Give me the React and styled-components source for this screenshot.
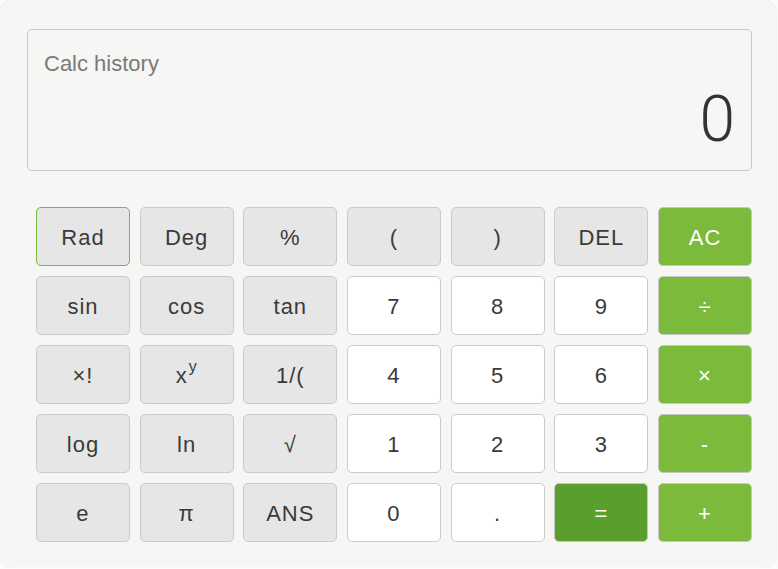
import React from "react";
import styled, { createGlobalStyle } from "styled-components";

const Global = createGlobalStyle`
  html, body { margin: 0; padding: 0; background: #fbfbfa; }
  body { font-family: "Liberation Sans", Arial, sans-serif; }
`;

const Card = styled.div`
  box-sizing: border-box;
  width: 776px;
  height: 567px;
  background: #f6f6f4;
  border-radius: 12px;
  box-shadow: 0 0 2px rgba(0, 0, 0, 0.12);
  padding: 29px 24px 0 27px;
  display: flex;
  flex-direction: column;
  gap: 36px;
`;

const Display = styled.div`
  box-sizing: border-box;
  height: 142px;
  border: 1px solid #c9c9c9;
  border-radius: 5px;
  padding: 20px 16px 0 16px;
  display: flex;
  flex-direction: column;
`;

const History = styled.div`
  font-size: 22px;
  color: #7a7a7a;
  line-height: 28px;
`;

const Result = styled.div`
  font-family: Roboto, "Liberation Sans", sans-serif;
  font-weight: 300;
  font-size: 64px;
  line-height: 64px;
  color: #333;
  text-align: right;
  margin-top: 10px;
`;

const Keys = styled.div`
  display: grid;
  grid-template-columns: repeat(7, 1fr);
  grid-auto-rows: 59px;
  column-gap: 9.7px;
  row-gap: 10px;
  padding-left: 9px;
`;

const palette = {
  fn: { bg: "#e6e6e6", fg: "#3a3a3a", border: "#cbcbcb" },
  num: { bg: "#ffffff", fg: "#3a3a3a", border: "#cbcbcb" },
  op: { bg: "#7cba3c", fg: "#ffffff", border: "#c6c6c6" },
  eq: { bg: "#5a9e2e", fg: "#ffffff", border: "#c6c6c6" },
};

const Key = styled.button`
  box-sizing: border-box;
  margin: 0;
  padding: 2px 0 0 0;
  border-radius: 5px;
  border: 1px solid ${(p) => (p.$active ? "#78b83a" : palette[p.$kind].border)};
  background: ${(p) => palette[p.$kind].bg};
  color: ${(p) => palette[p.$kind].fg};
  font-family: "Liberation Sans", Arial, sans-serif;
  font-size: 22px;
  letter-spacing: 1px;
  display: flex;
  align-items: center;
  justify-content: center;
  cursor: pointer;
`;

const Sup = styled.span`
  font-size: 16px;
  position: relative;
  top: -9px;
  margin-left: 1px;
`;

const rows = [
  [["Rad", "fn", true], ["Deg", "fn"], ["%", "fn"], ["(", "fn"], [")", "fn"], ["DEL", "fn"], ["AC", "op"]],
  [["sin", "fn"], ["cos", "fn"], ["tan", "fn"], ["7", "num"], ["8", "num"], ["9", "num"], ["÷", "op"]],
  [["×!", "fn"], ["xy", "fn"], ["1/(", "fn"], ["4", "num"], ["5", "num"], ["6", "num"], ["×", "op"]],
  [["log", "fn"], ["ln", "fn"], ["√", "fn"], ["1", "num"], ["2", "num"], ["3", "num"], ["-", "op"]],
  [["e", "fn"], ["π", "fn"], ["ANS", "fn"], ["0", "num"], [".", "num"], ["=", "eq"], ["+", "op"]],
];

export default function App() {
  return (
    <>
      <Global />
      <Card>
        <Display>
          <History>Calc history</History>
          <Result>0</Result>
        </Display>
        <Keys>
          {rows.flat().map(([label, kind, active], i) => (
            <Key key={i} $kind={kind} $active={active}>
              {label === "xy" ? (
                <>
                  x<Sup>y</Sup>
                </>
              ) : (
                label
              )}
            </Key>
          ))}
        </Keys>
      </Card>
    </>
  );
}
